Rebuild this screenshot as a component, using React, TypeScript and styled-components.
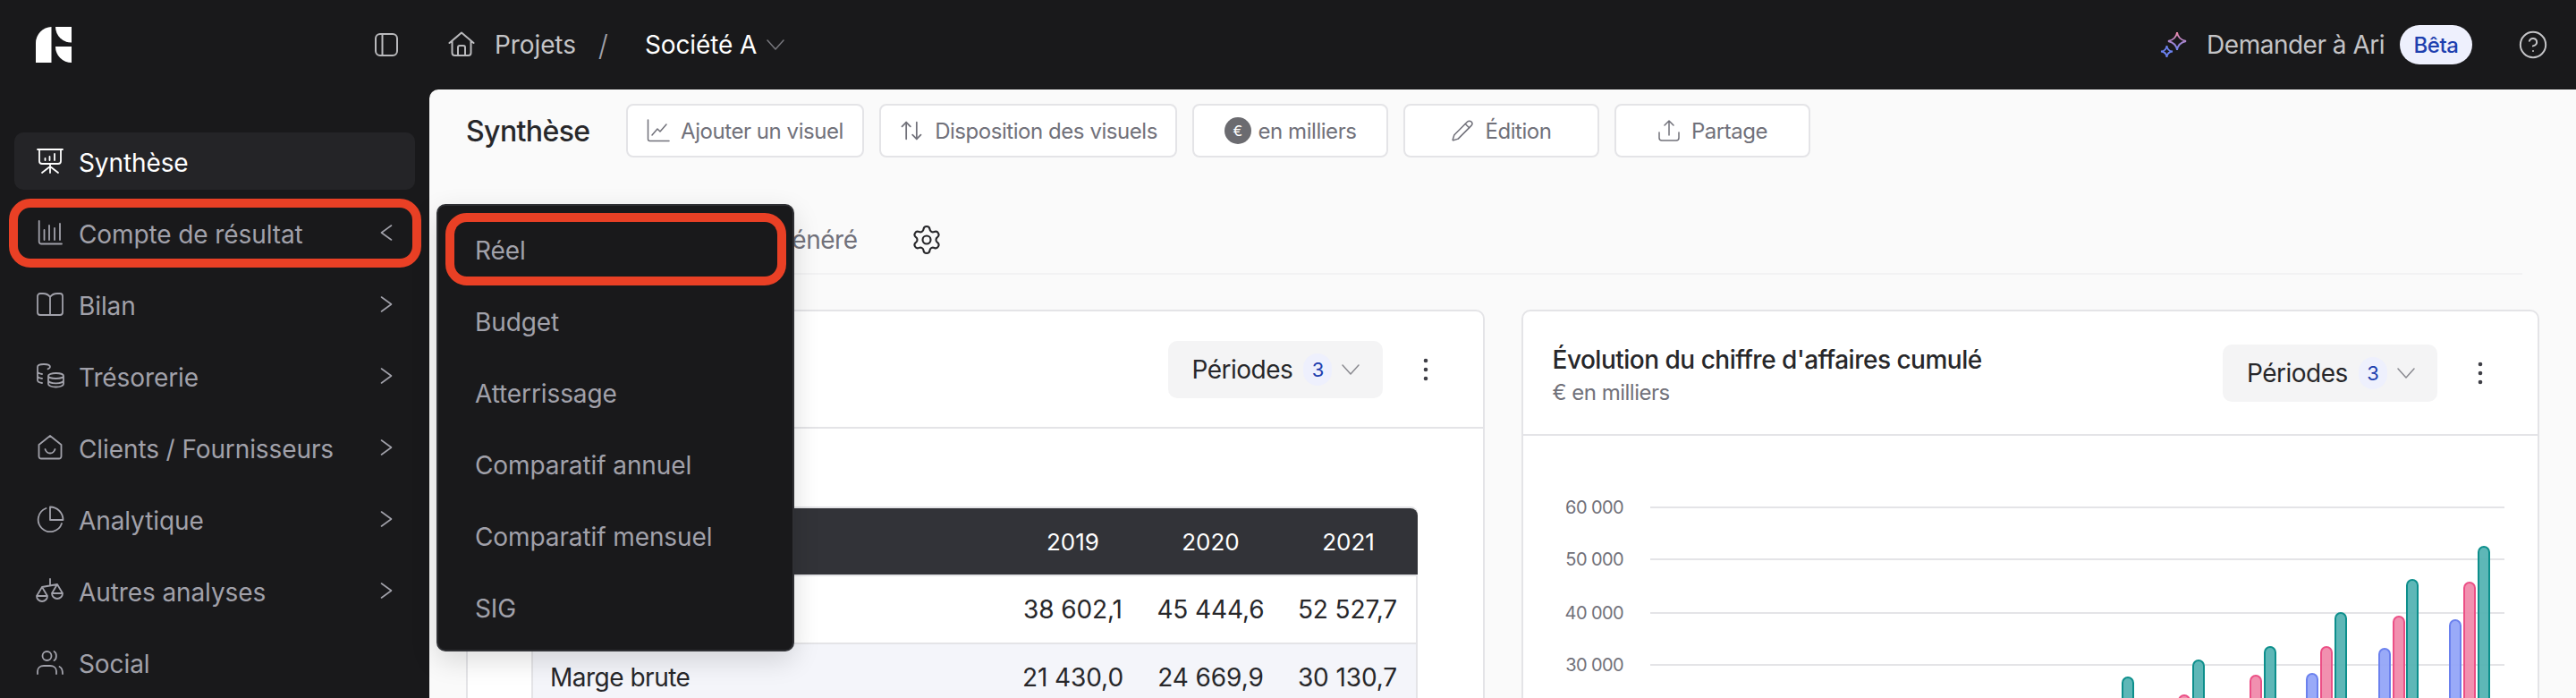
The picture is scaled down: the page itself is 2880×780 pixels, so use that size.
import React from "react";
import styled, { createGlobalStyle } from "styled-components";
import { ArrowUpDown, CircleHelp, Pencil, Settings } from "lucide-react";

const GlobalStyle = createGlobalStyle`
  html, body {
    margin: 0;
    height: 780px;
    overflow: hidden;
    background: #19191b;
    font-family: Inter, "Liberation Sans", sans-serif;
  }
  #root { height: 780px; }
`;

const Page = styled.div`
  position: relative;
  width: 2880px;
  height: 780px;
  overflow: hidden;
  display: grid;
  grid-template-rows: 100px 1fr;
  color: #a1a1aa;
  font-size: 28px;
  letter-spacing: -0.1px;
`;

const TopBar = styled.header`
  display: flex;
  align-items: center;
  padding: 0 31px 0 40px;
`;

const Logo = styled.svg`
  width: 40px;
  height: 40px;
  flex: none;
`;

const ToggleIcon = styled.svg`
  width: 28px;
  height: 28px;
  margin-left: 338px;
  fill: none;
  stroke: #b9b9bc;
  stroke-width: 2;
`;

const HomeIcon = styled.svg`
  width: 30px;
  height: 30px;
  margin-left: 55px;
  fill: none;
  stroke: #b9b9bc;
  stroke-width: 2;
  stroke-linecap: round;
  stroke-linejoin: round;
`;

const Crumb = styled.span<{ $current?: boolean }>`
  color: ${(p) => (p.$current ? "#ffffff" : "#c4c4c7")};
  margin-left: ${(p) => (p.$current ? "41px" : "22px")};
`;

const Slash = styled.span`
  color: #a1a1aa;
  margin-left: 25px;
  font-size: 32px;
  font-weight: 300;
`;

const ChevronDownIcon = styled.svg<{ $gap: number; $color: string }>`
  width: 20px;
  height: 12px;
  flex: none;
  margin-left: ${(p) => p.$gap}px;
  fill: none;
  stroke: ${(p) => p.$color};
  stroke-width: 1.5;
  stroke-linecap: round;
  stroke-linejoin: round;
`;

const AskAri = styled.div`
  margin-left: auto;
  display: flex;
  align-items: center;
  color: #c4c4c7;
  gap: 21px;
  letter-spacing: -0.5px;
`;

const BetaPill = styled.span`
  height: 44px;
  width: 81px;
  margin-left: -4px;
  border-radius: 22px;
  background: #eef0fd;
  color: #1e40af;
  font-size: 24px;
  font-weight: 500;
  display: flex;
  align-items: center;
  justify-content: center;
`;

const HelpIcon = styled(CircleHelp)`
  margin-left: 51px;
  color: #c4c4c7;
`;

const Body = styled.div`
  display: flex;
  min-height: 0;
`;

const Sidebar = styled.nav`
  width: 480px;
  flex: none;
  box-sizing: border-box;
  padding: 48px 16px 0;
  display: flex;
  flex-direction: column;
  gap: 16px;
`;

const NavItem = styled.div<{ $active?: boolean; $marked?: boolean }>`
  position: relative;
  height: 64px;
  flex: none;
  display: flex;
  align-items: center;
  gap: 16px;
  padding: 0 25px 0 24px;
  border-radius: 10px;
  background: ${(p) => (p.$active ? "#242427" : "transparent")};
  color: ${(p) => (p.$active ? "#ffffff" : "#a1a1aa")};

  ${(p) =>
    p.$marked &&
    `&::after {
      content: "";
      position: absolute;
      inset: -6px -7px -7px -6px;
      border: 10px solid #e94025;
      border-radius: 24px;
    }`}
`;

const NavLabel = styled.span`
  position: relative;
  top: 2px;
`;

const NavIcon = styled.svg`
  width: 32px;
  height: 32px;
  flex: none;
  fill: none;
  stroke: currentColor;
  stroke-width: 1.8;
  stroke-linecap: round;
  stroke-linejoin: round;
`;

const NavArrow = styled.svg`
  width: 14px;
  height: 20px;
  flex: none;
  margin-left: auto;
  fill: none;
  stroke: #a1a1aa;
  stroke-width: 1.6;
  stroke-linecap: round;
  stroke-linejoin: round;
`;

const Main = styled.main`
  flex: 1;
  min-width: 0;
  background: #fafafa;
  border-top-left-radius: 10px;
  padding: 16px 41px 0;
`;

const Toolbar = styled.div`
  display: flex;
  align-items: center;
  gap: 17px;
`;

const PageTitle = styled.h1`
  margin: 0 24px 0 0;
  width: 138px;
  font-size: 32px;
  font-weight: 500;
  color: #27272a;
  letter-spacing: -0.6px;
  white-space: nowrap;
`;

const ToolButton = styled.button<{ $w: number }>`
  width: ${(p) => p.$w}px;
  height: 60px;
  padding: 0;
  box-sizing: border-box;
  background: #ffffff;
  border: 2px solid #e4e4e7;
  border-radius: 8px;
  color: #71717a;
  font: inherit;
  font-size: 24px;
  letter-spacing: -0.45px;
  display: flex;
  align-items: center;
  justify-content: center;
  gap: 12px;
`;

const ToolIcon = styled.svg`
  width: 26px;
  height: 26px;
  fill: none;
  stroke: #71717a;
  stroke-width: 1.5;
  stroke-linecap: round;
  stroke-linejoin: round;
`;

const EuroBadge = styled.span`
  width: 30px;
  height: 30px;
  margin-right: -4px;
  border-radius: 50%;
  background: #6b6b70;
  color: #ffffff;
  font-size: 16px;
  display: flex;
  align-items: center;
  justify-content: center;
`;

const TabRow = styled.div`
  margin: 55px 19px 39px 0;
  height: 76px;
  box-sizing: border-box;
  padding-left: 239px;
  border-bottom: 2px solid #f2f2f3;
  display: flex;
  align-items: center;
  gap: 60px;
  color: #71717a;
  letter-spacing: -0.5px;
`;

const GearIcon = styled(Settings)`
  color: #27272a;
`;

const Cards = styled.div`
  display: flex;
  gap: 41px;
`;

const Card = styled.section`
  flex: 1;
  min-width: 0;
  min-height: 560px;
  box-sizing: border-box;
  background: #ffffff;
  border: 2px solid #e4e4e7;
  border-radius: 10px;
`;

const CardHeader = styled.div<{ $h: number }>`
  height: ${(p) => p.$h}px;
  box-sizing: content-box;
  padding: 0 54px 0 33px;
  border-bottom: 2px solid #e4e4e7;
  display: flex;
  align-items: center;
  justify-content: flex-end;
`;

const TitleBlock = styled.div`
  margin-right: auto;
  margin-top: 4px;
`;

const CardTitle = styled.div`
  font-size: 28px;
  font-weight: 500;
  color: #27272a;
  letter-spacing: -0.5px;
`;

const CardSub = styled.div`
  margin-top: 5px;
  font-size: 24px;
  color: #71717a;
  letter-spacing: -0.5px;
`;

const PeriodSelect = styled.div`
  width: 240px;
  height: 64px;
  box-sizing: border-box;
  padding-left: 27px;
  background: #f4f4f5;
  border-radius: 10px;
  color: #27272a;
  letter-spacing: -0.5px;
  display: flex;
  align-items: center;
`;

const CountBadge = styled.span`
  width: 32px;
  height: 36px;
  margin-left: 12px;
  border-radius: 16px;
  background: #eef0fd;
  color: #1e40af;
  font-size: 22px;
  display: flex;
  align-items: center;
  justify-content: center;
`;

const Dots = styled.svg`
  width: 20px;
  height: 32px;
  margin-left: 38px;
  fill: #3f3f46;
`;

const TableWrap = styled.div`
  padding: 87px 73px 0 71px;
`;

const DataTable = styled.table`
  width: 100%;
  border-collapse: separate;
  border-spacing: 0;
  table-layout: fixed;
  border-top: 2px solid #e4e4e7;
  border-top-left-radius: 8px;
  border-top-right-radius: 8px;
`;

const LabelCol = styled.col`
  width: auto;
`;

const ValueCol = styled.col`
  width: 154px;
`;

const Th = styled.th`
  height: 76px;
  box-sizing: border-box;
  padding: 0;
  background: #323338;
  border-bottom: 2px solid #e4e4e7;
  color: #ffffff;
  font-size: 26px;
  font-weight: 400;
  letter-spacing: 0;
  text-align: center;

  &:first-child { border-top-left-radius: 8px; }
  &:last-child { border-top-right-radius: 8px; }
`;

const Tr = styled.tr<{ $shaded?: boolean }>`
  background: ${(p) => (p.$shaded ? "#f4f5fa" : "#ffffff")};
`;

const Td = styled.td`
  height: 76px;
  box-sizing: border-box;
  padding: 0;
  border-bottom: 2px solid #e4e4e7;
  color: #27272a;
  letter-spacing: -0.1px;
  text-align: center;

  &:first-child {
    border-left: 2px solid #e4e4e7;
    padding-left: 19px;
    text-align: left;
    letter-spacing: -0.5px;
  }
  &:last-child { border-right: 2px solid #e4e4e7; }
`;

const Chart = styled.svg`
  display: block;
  width: 1135px;
  height: 293px;
`;

const AxisLabel = styled.text`
  font-size: 20px;
  letter-spacing: -0.6px;
  fill: #71717a;
  text-anchor: end;
  dominant-baseline: middle;
`;

const GridLine = styled.line`
  stroke: #e4e4e7;
  stroke-width: 2;
`;

const Menu = styled.div`
  position: absolute;
  left: 488px;
  top: 228px;
  width: 400px;
  height: 500px;
  box-sizing: border-box;
  padding: 16px 16px;
  background: #19191b;
  border: 2px solid #2f3034;
  border-radius: 10px;
  box-shadow: 0 10px 30px rgba(0, 0, 0, 0.14);
  display: flex;
  flex-direction: column;
  gap: 16px;
`;

const MenuItem = styled.div<{ $marked?: boolean }>`
  position: relative;
  height: 64px;
  flex: none;
  box-sizing: border-box;
  padding: 4px 0 0 25px;
  display: flex;
  align-items: center;
  color: #a1a1aa;

  ${(p) =>
    p.$marked &&
    `&::after {
      content: "";
      position: absolute;
      inset: -8px -9px -9px -8px;
      border: 10px solid #e94025;
      border-radius: 24px;
    }`}
`;

const icons: Record<string, React.ReactNode> = {
  synthese: (
    <>
      <path d="M2 3h28M4 3v13a3 3 0 003 3h18a3 3 0 003-3V3" />
      <path d="M10.5 15v-2M15.5 15v-4M21 15V8M16 19v3M16 22l-9 7M16 22l9 7M16 22v7" />
    </>
  ),
  compte: <path d="M3.7 3v23a2.5 2.5 0 002.5 2.5H29M9.5 13v11M15 8v16M21 11v13M27 6v18" />,
  bilan: (
    <path d="M16 8C14 5 11 4 8 4H5a3 3 0 00-3 3v18a3 3 0 003 3h22a3 3 0 003-3V7a3 3 0 00-3-3h-3c-3 0-6 1-8 4zM16 8v20" />
  ),
  tresorerie: (
    <path d="M14 16c0-1.700 3.800-3 8.500-3s8.500 1.300 8.500 3-3.800 3-8.500 3-8.500-1.300-8.500-3zM14 16v9c0 2 3.800 3.500 8.500 3.500S31 27 31 25v-9M14 21c0 1.900 3.800 3.300 8.500 3.300S31 22.900 31 21M2 6c0-1.700 3-3 7-3s7 1.300 7 3c0 1-1 1.800-2.500 2.300M2 6v15c0 1.400 1.800 2.500 5 3M2 11c0 1.400 1.800 2.500 5 3M2 16c0 1.400 1.800 2.500 5 3" />
  ),
  clients: (
    <path d="M3.500 13L16 3l12.500 10v13a2.500 2.500 0 01-2.500 2.500H6A2.500 2.500 0 013.500 26zM10.500 18c1 3 3.200 4.500 5.500 4.500s4.500-1.500 5.500-4.500" />
  ),
  analytique: <path d="M16 2.500V17h14.500A14.500 14.500 0 0016 2.500zM11.500 4A13.500 13.500 0 1029 21" />,
  autres: (
    <path d="M16 3v7M7 12l17-3M7 12l-6 10h12zM1 22a6 6 0 0012 0M24 9l-6 10h12zM18 19a6 6 0 0012 0" />
  ),
  social: (
    <path d="M7.500 9a5 5 0 1010 0 5 5 0 00-10 0zM20.500 4c3.200 1.500 3.200 8.500 0 10M2 29v-3c0-3.800 3-6 7-6h7c4 0 7 2.200 7 6v3M26.500 21c2.500 1 3.500 4 3.500 8" />
  ),
};

const navItems = [
  { key: "synthese", label: "Synthèse", active: true },
  { key: "compte", label: "Compte de résultat", open: true, arrow: true },
  { key: "bilan", label: "Bilan", arrow: true },
  { key: "tresorerie", label: "Trésorerie", arrow: true },
  { key: "clients", label: "Clients / Fournisseurs", arrow: true },
  { key: "analytique", label: "Analytique", arrow: true },
  { key: "autres", label: "Autres analyses", arrow: true },
  { key: "social", label: "Social" },
];

const menuItems = ["Réel", "Budget", "Atterrissage", "Comparatif annuel", "Comparatif mensuel", "SIG"];

// [x of left edge, top y] read from the picture, bottoms run off the page
const bars = [
  { fill: "#93a5f8", stroke: "#6b81ee", items: [[2578, 753], [2659, 725], [2738, 693]] },
  { fill: "#f08aab", stroke: "#ec4f86", items: [[2435, 777], [2515, 755], [2594, 723], [2675, 689], [2754, 651]] },
  { fill: "#55b3b3", stroke: "#0d8f8c", items: [[2372, 757], [2451, 738], [2531, 723], [2610, 685], [2690, 648], [2770, 611]] },
];

const gridLines = [
  { label: "60 000", y: 567 },
  { label: "50 000", y: 625 },
  { label: "40 000", y: 685 },
  { label: "30 000", y: 743 },
];

const Periods = () => (
  <>
    <PeriodSelect>
      Périodes
      <CountBadge>3</CountBadge>
      <ChevronDownIcon $gap={11} $color="#8a8a90" viewBox="0 0 20 12">
        <path d="M1 1l9 10 9-10" />
      </ChevronDownIcon>
    </PeriodSelect>
    <Dots viewBox="0 0 20 32">
      <circle cx="10" cy="6" r="2.300" />
      <circle cx="10" cy="16" r="2.300" />
      <circle cx="10" cy="26" r="2.300" />
    </Dots>
  </>
);

const App = () => {
  return (
    <Page>
      <GlobalStyle />
      <TopBar>
        <Logo viewBox="40 30 40 40" fill="#ffffff">
          <path d="M40 70V48A18 18 0 0157.500 30V70z" />
          <path d="M62 30H80V47.500A17.500 17.500 0 0162 30z" />
          <path d="M62 52H80V70A18 18 0 0162 52z" />
        </Logo>
        <ToggleIcon viewBox="0 0 28 28">
          <rect x="2" y="2" width="24" height="24" rx="5" />
          <path d="M9.500 2v24" />
        </ToggleIcon>
        <HomeIcon viewBox="0 0 30 30">
          <path d="M1.500 13L15 1.500 28.500 13M4.500 11v13a3 3 0 003 3h15a3 3 0 003-3V11M11 27v-9a2 2 0 012-2h4a2 2 0 012 2v9" />
        </HomeIcon>
        <Crumb>Projets</Crumb>
        <Slash>/</Slash>
        <Crumb $current>Société A</Crumb>
        <ChevronDownIcon $gap={11} $color="#77777d" viewBox="0 0 20 12">
          <path d="M1 1l9 10 9-10" />
        </ChevronDownIcon>
        <AskAri>
          <svg width="32" height="32" viewBox="0 0 32 32" fill="none" strokeWidth="1.800">
            <defs>
              <linearGradient id="ari" x1="0" y1="0" x2="0" y2="1">
                <stop offset="0" stopColor="#f28aa8" />
                <stop offset="1" stopColor="#6b81ee" />
              </linearGradient>
            </defs>
            <path d="M20 2Q21 10 30 12Q21 14 20 22Q19 14 10 12Q19 10 20 2z" stroke="url(#ari)" />
            <path d="M8.500 17Q9 23 15 23.500Q9 24 8.500 30Q8 24 2 23.500Q8 23 8.500 17z" stroke="#6b81ee" />
          </svg>
          Demander à Ari
          <BetaPill>Bêta</BetaPill>
        </AskAri>
        <HelpIcon size={34} strokeWidth={1.4} />
      </TopBar>
      <Body>
        <Sidebar>
          {navItems.map((item) => (
            <NavItem key={item.key} $active={item.active} $marked={item.open}>
              <NavIcon viewBox="0 0 32 32">{icons[item.key]}</NavIcon>
              <NavLabel>{item.label}</NavLabel>
              {item.arrow && (
                <NavArrow viewBox="0 0 14 20">
                  <path d={item.open ? "M12.500 2L1.500 10l11 8" : "M1.500 2l11 8-11 8"} />
                </NavArrow>
              )}
            </NavItem>
          ))}
        </Sidebar>
        <Main>
          <Toolbar>
            <PageTitle>Synthèse</PageTitle>
            <ToolButton $w={266}>
              <ToolIcon viewBox="0 0 26 26">
                <path d="M1.500 1v21.500a2 2 0 002 2H25M6 18l6-7 3 3 7-8" />
              </ToolIcon>
              Ajouter un visuel
            </ToolButton>
            <ToolButton $w={333}>
              <ArrowUpDown size={28} strokeWidth={1.5} />
              Disposition des visuels
            </ToolButton>
            <ToolButton $w={219}>
              <EuroBadge>€</EuroBadge>
              en milliers
            </ToolButton>
            <ToolButton $w={219}>
              <Pencil size={26} strokeWidth={1.4} />
              Édition
            </ToolButton>
            <ToolButton $w={219}>
              <ToolIcon viewBox="0 0 26 26">
                <path d="M13 18V2M8 7l5-5 5 5M2 15v6a3 3 0 003 3h16a3 3 0 003-3v-6" />
              </ToolIcon>
              Partage
            </ToolButton>
          </Toolbar>
          <TabRow>
            <span>Rapport généré</span>
            <GearIcon size={36} strokeWidth={1.4} />
          </TabRow>
          <Cards>
            <Card>
              <CardHeader $h={129}>
                <Periods />
              </CardHeader>
              <TableWrap>
                <DataTable>
                  <colgroup>
                    <LabelCol />
                    <ValueCol />
                    <ValueCol />
                    <ValueCol />
                  </colgroup>
                  <thead>
                    <tr>
                      <Th />
                      <Th>2019</Th>
                      <Th>2020</Th>
                      <Th>2021</Th>
                    </tr>
                  </thead>
                  <tbody>
                    <Tr>
                      <Td>Chiffre d'affaires</Td>
                      <Td>38 602,1</Td>
                      <Td>45 444,6</Td>
                      <Td>52 527,7</Td>
                    </Tr>
                    <Tr $shaded>
                      <Td>Marge brute</Td>
                      <Td>21 430,0</Td>
                      <Td>24 669,9</Td>
                      <Td>30 130,7</Td>
                    </Tr>
                  </tbody>
                </DataTable>
              </TableWrap>
            </Card>
            <Card>
              <CardHeader $h={137}>
                <TitleBlock>
                  <CardTitle>Évolution du chiffre d'affaires cumulé</CardTitle>
                  <CardSub>€ en milliers</CardSub>
                </TitleBlock>
                <Periods />
              </CardHeader>
              <Chart viewBox="1702 487 1135 293">
                {gridLines.map((g) => (
                  <g key={g.label}>
                    <AxisLabel x="1814" y={g.y + 2}>
                      {g.label}
                    </AxisLabel>
                    <GridLine x1="1844" x2="2799" y1={g.y} y2={g.y} />
                  </g>
                ))}
                {bars.map((series) =>
                  series.items.map(([x, top]) => (
                    <path
                      key={x}
                      d={`M${x} 800V${top + 6}a6 6 0 0 1 12 0V800`}
                      fill={series.fill}
                      fillOpacity="0.95"
                      stroke={series.stroke}
                      strokeWidth="2"
                    />
                  ))
                )}
              </Chart>
            </Card>
          </Cards>
        </Main>
      </Body>
      <Menu>
        {menuItems.map((label, i) => (
          <MenuItem key={label} $marked={i === 0}>
            {label}
          </MenuItem>
        ))}
      </Menu>
    </Page>
  );
};

export default App;
